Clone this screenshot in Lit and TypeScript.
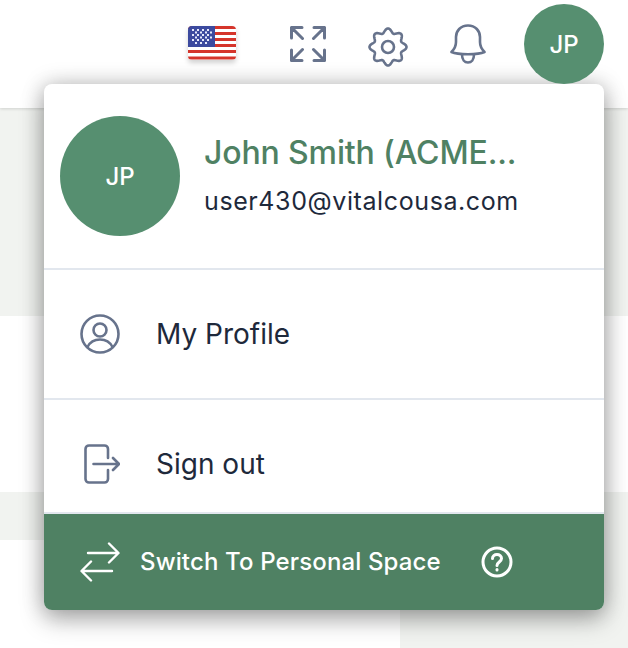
import { LitElement, css, html } from "lit";
import { customElement } from "lit/decorators.js";

// wavy outline for the settings cog, eight rounded teeth
function gearPath(teeth = 8, radius = 16.4, depth = 2.1) {
  const points: string[] = [];
  for (let i = 0; i < 240; i++) {
    const a = (i / 240) * Math.PI * 2;
    const r = radius + depth * Math.cos(teeth * a);
    points.push(`${(20 + r * Math.sin(a)).toFixed(2)} ${(20 - r * Math.cos(a)).toFixed(2)}`);
  }
  return `M${points.join("L")}Z`;
}

@customElement("app-root")
export class AppRoot extends LitElement {
  static styles = css`
    :host {
      display: block;
      width: 628px;
      height: 648px;
      position: relative;
      overflow: hidden;
      background: #fff;
      font-family: Inter, "Noto Sans", sans-serif;
    }

    .header {
      position: relative;
      height: 108px;
      box-sizing: border-box;
      display: flex;
      justify-content: flex-end;
      padding: 4px 24px 0 0;
      background: #fff;
      box-shadow: 0 1px 3px rgba(0, 0, 0, 0.14);
    }

    .tools {
      position: relative;
      z-index: 2;
      display: flex;
      align-items: center;
      height: 80px;
    }

    .tools svg {
      display: block;
      fill: none;
      stroke: #67738c;
      stroke-linecap: round;
      stroke-linejoin: round;
    }

    .tools .flag {
      width: 48px;
      height: 34px;
      margin: -2px 54px 0 0;
      border-radius: 4px;
      box-shadow: 0 3px 5px rgba(0, 0, 0, 0.18);
    }

    .expand {
      margin-right: 42px;
    }

    .gear {
      margin: 6px 42px 0 0;
    }

    .bell {
      margin-right: 38px;
    }

    .avatar {
      display: flex;
      align-items: center;
      justify-content: center;
      border-radius: 50%;
      background: #568f70;
      color: #fff;
      font-size: 24px;
      font-weight: 500;
      flex: none;
    }

    .avatar.small {
      width: 80px;
      height: 80px;
    }

    .avatar.large {
      width: 120px;
      height: 120px;
    }

    .page {
      height: 540px;
      display: grid;
      grid-template-columns: 400px 1fr;
      grid-template-rows: 208px 176px 48px 1fr;
    }

    .band {
      background: #f1f3f0;
    }

    .wide {
      grid-column: 1 / 3;
    }

    .white {
      background: #fff;
    }

    .menu {
      position: absolute;
      z-index: 1;
      left: 44px;
      top: 84px;
      width: 560px;
      height: 526px;
      display: flex;
      flex-direction: column;
      overflow: hidden;
      background: #fff;
      border-radius: 8px;
      box-shadow: 0 10px 25px rgba(0, 0, 0, 0.28), 0 0 22px rgba(0, 0, 0, 0.22);
    }

    .who {
      height: 186px;
      box-sizing: border-box;
      display: flex;
      align-items: center;
      gap: 24px;
      padding: 0 16px;
      border-bottom: 2px solid #e2e7ee;
      flex: none;
    }

    .info {
      margin-bottom: 2px;
    }

    .name {
      font-size: 32px;
      line-height: 40px;
      font-weight: 500;
      color: #4f8163;
      letter-spacing: -0.14px;
    }

    .mail {
      margin-top: 12px;
      font-size: 25px;
      line-height: 32px;
      color: #1e293b;
      letter-spacing: 0.6px;
    }

    .row {
      height: 130px;
      box-sizing: border-box;
      flex: none;
      display: flex;
      align-items: center;
      padding-left: 36px;
      gap: 36px;
      font-size: 28px;
      color: #1e293b;
      border-bottom: 2px solid #e2e7ee;
    }

    .row svg {
      width: 40px;
      height: 40px;
      fill: none;
      stroke: #67738c;
      stroke-width: 2.6;
      stroke-linecap: round;
      stroke-linejoin: round;
      flex: none;
    }

    .row.last {
      height: 114px;
      padding-top: 16px;
    }

    .switch {
      flex: 1;
      display: flex;
      align-items: center;
      padding-left: 36px;
      background: #4f8163;
      color: #fff;
      font-size: 24px;
      font-weight: 500;
      letter-spacing: 0.14px;
    }

    .switch span {
      margin-bottom: 2px;
    }

    .switch svg {
      fill: none;
      stroke: #fff;
      stroke-linecap: round;
      stroke-linejoin: round;
      flex: none;
    }

    .switch .arrows {
      margin-right: 20px;
    }

    .switch .help {
      margin-left: 40px;
    }
  `;

  render() {
    return html`
      <div class="header">
        <div class="tools">
          <svg class="flag" viewBox="0 0 48 34" style="stroke:none">
            <rect width="48" height="34" fill="#fff" />
            <path
              d="M0 1.500h48M0 7.500h48M0 13.500h48M0 19.500h48M0 25.500h48M0 32h48"
              stroke="#d5352b"
              stroke-width="3"
              stroke-linecap="butt"
            />
            <rect width="27" height="21" fill="#3c4a9f" />
            <path
              d="M4 4h20M4 9h20M4 14h20M7 6.500h17M7 11.500h17M7 17h14"
              stroke="#e6e9fb"
              stroke-width="2"
              stroke-dasharray="2 3"
              stroke-linecap="butt"
            />
          </svg>
          <svg class="expand" width="36" height="36" viewBox="0 0 36 36" stroke-width="3">
            <path
              d="M1.500 12V1.500H12M1.500 1.500L12.500 12.500M24 1.500h10.500V12M34.500 1.500L23.500 12.500M1.500 24v10.500H12M1.500 34.500L12.500 23.500M34.500 24v10.500H24M34.500 34.500L23.500 23.500"
            />
          </svg>
          <svg class="gear" width="40" height="40" viewBox="0 0 40 40" stroke-width="2.600">
            <path d=${gearPath()} />
            <circle cx="20" cy="20" r="6" />
          </svg>
          <svg class="bell" width="36" height="40" viewBox="0 0 36 40" stroke-width="2.600">
            <path
              d="M18 1.500C10.500 1.500 6 7 6 13v5c0 4-1.500 7-4.500 10C8 31 28 31 34.500 28 31.500 25 30 22 30 18v-5C30 7 25.500 1.500 18 1.500z"
            />
            <path d="M12 30.500c0 5 2.500 8 6 8s6-3 6-8" />
          </svg>
          <div class="avatar small">JP</div>
        </div>
      </div>

      <div class="page">
        <div class="band wide"></div>
        <div class="white wide"></div>
        <div class="band wide"></div>
        <div class="white"></div>
        <div class="band"></div>
      </div>

      <div class="menu">
        <div class="who">
          <div class="avatar large">JP</div>
          <div class="info">
            <div class="name">John Smith (ACME...</div>
            <div class="mail">user430@vitalcousa.com</div>
          </div>
        </div>
        <div class="row">
          <svg viewBox="0 0 40 40">
            <circle cx="20" cy="20" r="18.500" />
            <circle cx="20" cy="16" r="6.500" />
            <path d="M7.500 33c2.500-5 7-7.500 12.500-7.500S30 28 32.500 33" />
          </svg>
          <span>My Profile</span>
        </div>
        <div class="row last">
          <svg viewBox="0 0 40 40">
            <path
              d="M28 14V5a3.500 3.500 0 0 0-3.500-3.500H9A3.500 3.500 0 0 0 5.500 5v30A3.500 3.500 0 0 0 9 38.500h15.500A3.500 3.500 0 0 0 28 35v-9"
            />
            <path d="M13.500 20H39M33 14l6 6-6 6" />
          </svg>
          <span>Sign out</span>
        </div>
        <div class="switch">
          <svg class="arrows" width="40" height="40" viewBox="0 0 40 40" stroke-width="2.400">
            <path d="M8 11h30M29 1.500L38.500 11 29 20.500" />
            <path d="M32 29H2M11 19.500L1.500 29l9.500 9.500" />
          </svg>
          <span>Switch To Personal Space</span>
          <svg class="help" width="32" height="32" viewBox="0 0 32 32" stroke-width="3">
            <circle cx="16" cy="16" r="14" />
            <path d="M11.500 12.500c0-2.500 2-4 4.500-4s4.500 1.500 4.500 4c0 3.500-4.500 3.500-4.500 7" />
            <path d="M16 23.500v.500" />
          </svg>
        </div>
      </div>
    `;
  }
}
